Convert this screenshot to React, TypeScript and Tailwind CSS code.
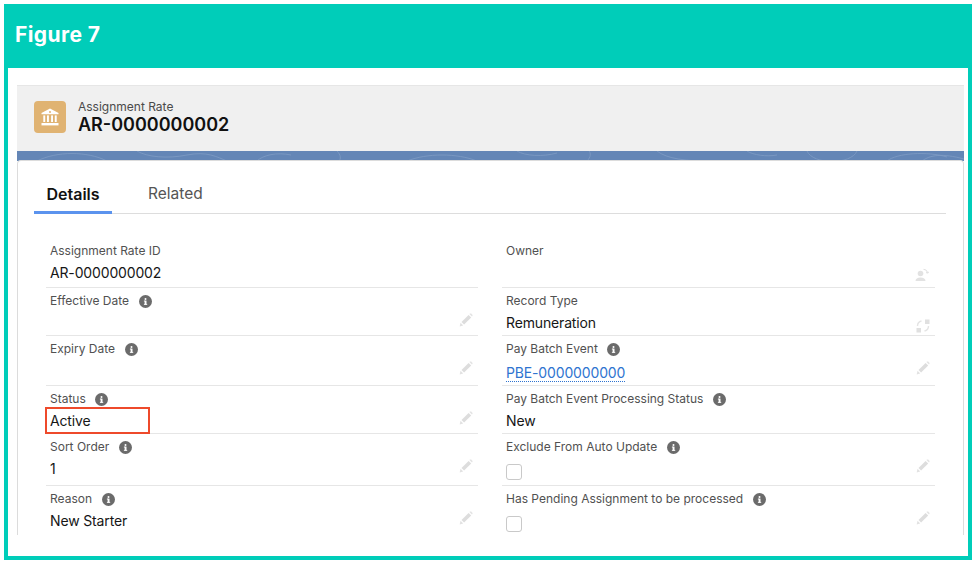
import type { ReactNode } from 'react';

function InfoIcon() {
  return (
    <svg viewBox="0 0 13 13" className="w-[13px] h-[13px] ml-[9.5px] shrink-0">
      <circle cx="6.5" cy="6.5" r="6.5" fill="#6b6b6b" />
      <rect x="5.6" y="5.6" width="1.9" height="4" fill="#fff" />
      <rect x="4.9" y="5.6" width="1.4" height="0.9" fill="#fff" />
      <rect x="4.9" y="8.9" width="3.3" height="0.9" fill="#fff" />
      <circle cx="6.5" cy="3.9" r="1" fill="#fff" />
    </svg>
  );
}

function PencilIcon() {
  return (
    <svg viewBox="0 0 14 14" className="w-[14px] h-[14px] shrink-0">
      <path d="M0.6 13.4l1-3.6 2.6 2.6z" fill="#e2e2e2" />
      <path d="M2.5 9L9.6 1.9l2.6 2.6-7.1 7.1z" fill="#dddddd" />
      <path d="M10.4 1.1l0.6-0.5c0.4-0.3 0.9-0.3 1.2 0l1.2 1.2c0.3 0.3 0.3 0.8 0 1.2l-0.5 0.6z" fill="#e4e4e4" />
    </svg>
  );
}

function OwnerIcon() {
  return (
    <svg viewBox="0 0 14 14" className="w-[14px] h-[14px] shrink-0 mt-[5px] mr-[1px]">
      <circle cx="5.5" cy="5.5" r="2.8" fill="#e2e2e2" />
      <path d="M0.5 13c0-2.4 2-3.6 5-3.6s5 1.2 5 3.6z" fill="#e2e2e2" />
      <path d="M8.5 1.2c2 0.3 3.8 1.8 4 4M12.5 5.2l1.2-1.2M12.5 5.2l-1.3-1" stroke="#e2e2e2" strokeWidth="1.1" fill="none" />
    </svg>
  );
}

function SwitchIcon() {
  return (
    <svg viewBox="0 0 14 14" className="w-[14px] h-[14px] shrink-0 mt-[6px]">
      <rect x="9" y="0.5" width="4.5" height="4.5" fill="#e0e0e0" />
      <rect x="0.5" y="9" width="4.5" height="4.5" fill="#e0e0e0" />
      <path d="M1.5 7c0-2.4 1.6-4.4 4-5M12.5 7c0 2.4-1.6 4.4-4 5" stroke="#e4e4e4" strokeWidth="1.4" fill="none" />
    </svg>
  );
}

function BankIcon() {
  return (
    <svg viewBox="0 0 20 20" className="w-5 h-5" fill="#fff">
      <path d="M10 1.5L18.5 6v1.2h-17V6z" />
      <circle cx="10" cy="4.9" r="1" fill="#e0b372" />
      <rect x="3.3" y="8.4" width="1.9" height="6.6" />
      <rect x="7" y="8.4" width="1.9" height="6.6" />
      <rect x="11.1" y="8.4" width="1.9" height="6.6" />
      <rect x="14.8" y="8.4" width="1.9" height="6.6" />
      <rect x="1.5" y="16" width="17" height="2.4" />
    </svg>
  );
}

function Checkbox() {
  return <div className="w-4 h-4 mt-[5px] rounded-[3px] border border-[#c9c9c9] bg-white" />;
}

interface FieldProps {
  label: string;
  info?: boolean;
  value?: ReactNode;
  icon?: ReactNode;
  className: string;
  last?: boolean;
}

function Field({ label, info = true, value, icon = <PencilIcon />, className, last }: FieldProps) {
  return (
    <div className={`pl-1 pr-[5px] ${last ? '' : 'border-b-[1.5px] border-[#e6e6e6]'} ${className}`}>
      <div className="flex items-center h-4 text-[12px] leading-4 text-[#515151]">
        {label}
        {info && <InfoIcon />}
      </div>
      <div className="flex items-start justify-between h-5 mt-1 text-[14px] leading-5 tracking-[-0.15px] text-[#161616]">
        <div>{value}</div>
        {icon}
      </div>
    </div>
  );
}

function Band() {
  return (
    <svg viewBox="0 0 947 10" preserveAspectRatio="none" className="block w-full h-[10px] bg-[#6486b6]">
      <g fill="none" stroke="#7f9cc4" strokeWidth="0.8">
        <path d="M20 10C40 0 70 0 90 10M120 0c10 6 30 8 50 4s30 2 40 6M240 10c6-6 20-9 34-6M320 0c4 4 4 8 2 10" />
        <path d="M390 10c20-8 50-8 70 0M500 0c8 5 26 6 40 2M570 10c4-4 4-8 2-10M640 0c10 8 30 10 50 10" />
        <path d="M730 0c6 4 20 6 30 4M790 0c6 14 44 14 50 0M870 10c10-8 40-10 60-4M905 10c8-6 20-8 42-2" />
      </g>
    </svg>
  );
}

export default function App() {
  return (
    <div className="w-[976px] h-[564px] p-1 bg-white font-['Inter',sans-serif]">
      <div className="flex flex-col h-full border-x-4 border-b-4 border-[#00cdb9]">
        <div className="h-16 -mx-1 shrink-0 bg-[#00cdb9] flex items-center pl-[11px] pb-[2px] text-white font-bold text-[21px] tracking-[0.4px]">
          Figure 7
        </div>
        <div className="flex-1 min-h-0 flex flex-col pt-[17px] pb-[21px] pl-[9px] pr-1 bg-white">
          <div className="h-[66px] shrink-0 bg-[#f0f0f0] border-t border-[#e6e6e6] flex items-center pl-[17px] pb-1 gap-3">
            <div className="w-8 h-8 rounded bg-[#e0b372] flex items-center justify-center">
              <BankIcon />
            </div>
            <div className="pt-px">
              <div className="text-[12px] leading-[14px] text-[#4a4a4a]">Assignment Rate</div>
              <div className="text-[18px] leading-[21px] font-semibold text-[#111]">AR-0000000002</div>
            </div>
          </div>
          <Band />
          <div className="relative flex-1 min-h-0 -mt-px bg-white rounded-t border-x border-t border-[#dcdcdc]">
            <div className="flex items-end h-[53px] ml-4 mr-[17px] border-b border-[#dddddd]">
              <div className="w-[78px] h-[40px] pt-2 text-center text-[16px] leading-6 font-semibold text-[#111] border-b-[3px] border-[#5b93ee] -mb-px">
                Details
              </div>
              <div className="h-[40px] pt-[9px] ml-[36px] text-[15.5px] leading-6 text-[#555]">Related</div>
            </div>
            <div className="grid grid-cols-[432px_433px] gap-x-6 ml-[28px] mt-[26px]">
              <Field className="h-12 pt-[3px]" label="Assignment Rate ID" info={false} value="AR-0000000002" icon={null} />
              <Field className="h-12 pt-[3px]" label="Owner" info={false} icon={<OwnerIcon />} />

              <Field className="h-12 pt-[5px]" label="Effective Date" />
              <Field className="h-12 pt-[5px]" label="Record Type" info={false} value="Remuneration" icon={<SwitchIcon />} />

              <Field className="h-[50px] pt-[5px]" label="Expiry Date" />
              <Field
                className="h-[50px] pt-[5px]"
                label="Pay Batch Event"
                value={
                  <span className="relative top-[2px] text-[#2f74d0] border-b border-dotted border-[#2f74d0]">
                    PBE-0000000000
                  </span>
                }
              />

              <Field className="h-12 pt-[5px]" label="Status" value="Active" />
              <Field className="h-12 pt-[5px]" label="Pay Batch Event Processing Status" value="New" icon={null} />

              <Field className="h-[52px] pt-[5px]" label="Sort Order" value="1" />
              <Field className="h-[52px] pt-[5px]" label="Exclude From Auto Update" value={<Checkbox />} />

              <Field className="h-[49px] pt-[5px]" label="Reason" value="New Starter" last />
              <Field className="h-[49px] pt-[5px]" label="Has Pending Assignment to be processed" value={<Checkbox />} last />
            </div>
            {/* callout around the Status value */}
            <div className="absolute left-[27px] top-[246px] w-[105px] h-[27px] border-2 border-[#ee4a2b]" />
          </div>
        </div>
      </div>
    </div>
  );
}
